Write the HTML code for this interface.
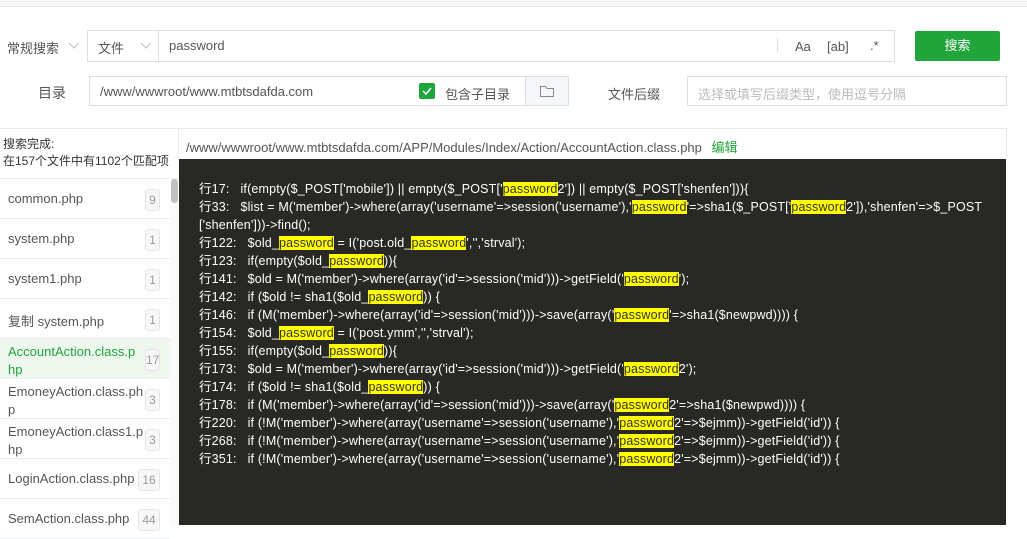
<!DOCTYPE html>
<html><head><meta charset="utf-8"><style>
*{box-sizing:border-box;margin:0;padding:0}
body{width:1027px;height:525px;overflow:hidden;background:#fff;font-family:"Liberation Sans","Noto Sans CJK SC",sans-serif;font-size:13px;color:#555;position:relative}
.a{position:absolute}
.box{position:absolute;border:1px solid #dcdfe6;background:#fff}
.code{position:absolute;left:179px;top:159px;width:827px;height:366px;background:#282824;color:#fff;font-size:12.5px;letter-spacing:0.17px;padding:21px 0 0 20px;line-height:18px;white-space:nowrap}
.code b{font-weight:normal;background:#ff0;color:#333}
.item{position:absolute;left:0;width:170px;height:40px;border-bottom:1px solid #e8ebf2;font-size:13px;color:#555}
.item span{position:absolute;left:8px;top:12px}
.item i{position:absolute;left:145px;top:10px;width:15px;height:22px;border:1px solid #e4e4e4;border-radius:3px;background:#f7f7f7;font-style:normal;font-size:12px;color:#999;text-align:center;line-height:20px}
.item.two span{top:4px;line-height:18px}
</style></head><body>
<div class="a" style="left:0;top:0;width:1027px;height:7px;background:#f5f5f5;border-bottom:1px solid #e6e6e6"></div>
<div class="a" style="left:7px;top:38px">常规搜索</div>
<svg class="a" style="left:68px;top:42px" width="12" height="8"><path d="M1 1l5 5 5-5" stroke="#bbb" fill="none"/></svg>
<div class="box" style="left:87px;top:30px;width:808px;height:32px"></div>
<div class="a" style="left:87px;top:30px;width:72px;height:32px;border-right:1px solid #dcdfe6"></div>
<div class="a" style="left:98px;top:38px">文件</div>
<svg class="a" style="left:140px;top:42px" width="12" height="8"><path d="M1 1l5 5 5-5" stroke="#bbb" fill="none"/></svg>
<div class="a" style="left:169px;top:38px">password</div>
<div class="a" style="left:777px;top:38px;width:1px;height:14px;background:#ddd"></div>
<div class="a" style="left:795px;top:39px">Aa</div>
<div class="a" style="left:827px;top:39px">[ab]</div>
<div class="a" style="left:870px;top:38px">.*</div>
<div class="a" style="left:915px;top:31px;width:85px;height:30px;background:#20a53a;border-radius:2px;color:#fff;text-align:center;line-height:30px">搜索</div>
<div class="a" style="left:38px;top:83px;font-size:14px">目录</div>
<div class="box" style="left:89px;top:76px;width:480px;height:30px"></div>
<div class="a" style="left:100px;top:84px">/www/wwwroot/www.mtbtsdafda.com</div>
<div class="a" style="left:419px;top:83px;width:16px;height:16px;background:#20a53a;border-radius:2px"><svg width="16" height="16"><path d="M4 8l3 3 5-6" stroke="#fff" stroke-width="1.5" fill="none"/></svg></div>
<div class="a" style="left:445px;top:84px">包含子目录</div>
<div class="a" style="left:525px;top:76px;width:44px;height:30px;background:#f5f6fa;border:1px solid #dcdfe6"><svg style="position:absolute;left:14px;top:8px" width="14" height="12"><path d="M0.5 1.5h5l1.5 2h6.5v8h-13z" stroke="#888" fill="none"/></svg></div>
<div class="a" style="left:608px;top:84px">文件后缀</div>
<div class="box" style="left:687px;top:76px;width:320px;height:30px"></div>
<div class="a" style="left:698px;top:84px;color:#bbb">选择或填写后缀类型，使用逗号分隔</div>
<div class="a" style="left:0;top:128px;width:1007px;height:1px;background:#e8ebf2"></div>
<div class="a" style="left:178px;top:128px;width:1px;height:32px;background:#e8ebf2"></div>
<div class="a" style="left:1006px;top:128px;width:1px;height:32px;background:#e8ebf2"></div>
<div class="a" style="left:3px;top:136px;font-size:12px;color:#333;line-height:17px">搜索完成:<br>在157个文件中有1102个匹配项</div>
<div class="a" style="left:0;top:178px;width:178px;height:1px;background:#e8ebf2"></div>
<div class="a" style="left:186px;top:137px">/www/wwwroot/www.mtbtsdafda.com/APP/Modules/Index/Action/AccountAction.class.php <span style="color:#20a53a;margin-left:6px">编辑</span></div>
<div class="item" style="top:179px"><span>common.php</span><i>9</i></div>
<div class="item" style="top:219px"><span>system.php</span><i>1</i></div>
<div class="item" style="top:259px"><span>system1.php</span><i>1</i></div>
<div class="item" style="top:299px"><span>复制 system.php</span><i>1</i></div>
<div class="item two" style="top:339px;background:#eef7ee"><span style="color:#20a53a">AccountAction.class.p<br>hp</span><i>17</i></div>
<div class="item two" style="top:379px"><span>EmoneyAction.class.ph<br>p</span><i>3</i></div>
<div class="item two" style="top:419px"><span>EmoneyAction.class1.p<br>hp</span><i>3</i></div>
<div class="item" style="top:459px"><span>LoginAction.class.php</span><i style="left:138px;width:22px">16</i></div>
<div class="item" style="top:499px"><span>SemAction.class.php</span><i style="left:138px;width:22px">44</i></div>
<div class="a" style="left:170px;top:179px;width:8px;height:346px;background:#fafafa"></div>
<div class="a" style="left:171px;top:179px;width:7px;height:24px;background:#c1c1c1;border-radius:4px"></div>
<div class="code">
行17:&nbsp;&nbsp; if(empty($_POST['mobile']) || empty($_POST['<b>password</b>2']) || empty($_POST['shenfen'])){<br>
行33:&nbsp;&nbsp; $list = M('member')-&gt;where(array('username'=&gt;session('username'),'<b>password</b>'=&gt;sha1($_POST['<b>password</b>2']),'shenfen'=&gt;$_POST<br>
['shenfen']))-&gt;find();<br>
行122:&nbsp;&nbsp; $old_<b>password</b> = I('post.old_<b>password</b>','','strval');<br>
行123:&nbsp;&nbsp; if(empty($old_<b>password</b>)){<br>
行141:&nbsp;&nbsp; $old = M('member')-&gt;where(array('id'=&gt;session('mid')))-&gt;getField('<b>password</b>');<br>
行142:&nbsp;&nbsp; if ($old != sha1($old_<b>password</b>)) {<br>
行146:&nbsp;&nbsp; if (M('member')-&gt;where(array('id'=&gt;session('mid')))-&gt;save(array('<b>password</b>'=&gt;sha1($newpwd)))) {<br>
行154:&nbsp;&nbsp; $old_<b>password</b> = I('post.ymm','','strval');<br>
行155:&nbsp;&nbsp; if(empty($old_<b>password</b>)){<br>
行173:&nbsp;&nbsp; $old = M('member')-&gt;where(array('id'=&gt;session('mid')))-&gt;getField('<b>password</b>2');<br>
行174:&nbsp;&nbsp; if ($old != sha1($old_<b>password</b>)) {<br>
行178:&nbsp;&nbsp; if (M('member')-&gt;where(array('id'=&gt;session('mid')))-&gt;save(array('<b>password</b>2'=&gt;sha1($newpwd)))) {<br>
行220:&nbsp;&nbsp; if (!M('member')-&gt;where(array('username'=&gt;session('username'),'<b>password</b>2'=&gt;$ejmm))-&gt;getField('id')) {<br>
行268:&nbsp;&nbsp; if (!M('member')-&gt;where(array('username'=&gt;session('username'),'<b>password</b>2'=&gt;$ejmm))-&gt;getField('id')) {<br>
行351:&nbsp;&nbsp; if (!M('member')-&gt;where(array('username'=&gt;session('username'),'<b>password</b>2'=&gt;$ejmm))-&gt;getField('id')) {
</div>
</body></html>
